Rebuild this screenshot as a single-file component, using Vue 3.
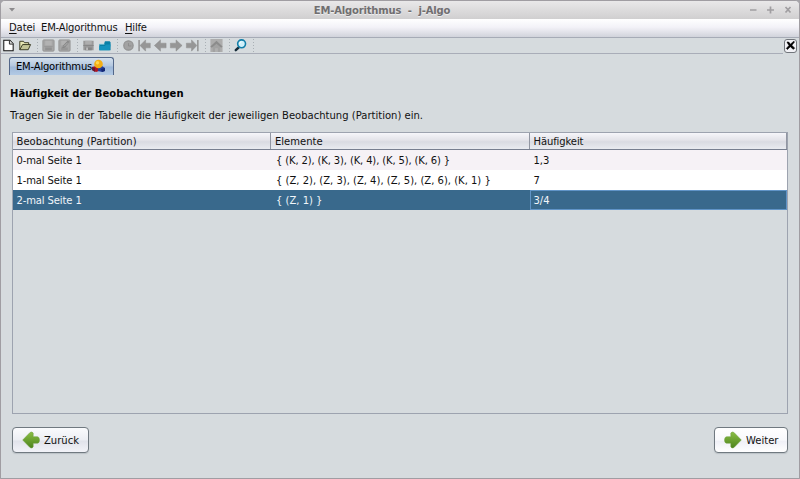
<script setup>
const rows = [
  { name: '0-mal Seite 1', items: '{ (K, 2), (K, 3), (K, 4), (K, 5), (K, 6) }', count: '1,3', tight: true },
  { name: '1-mal Seite 1', items: '{ (Z, 2), (Z, 3), (Z, 4), (Z, 5), (Z, 6), (K, 1) }', count: '7' },
  { name: '2-mal Seite 1', items: '{ (Z, 1) }', count: '3/4', selected: true },
]
</script>

<template>
  <div class="window">
    <header class="titlebar">
      <svg class="sysmenu" width="8" height="6"><path d="M1 1h6L4 4.500z" fill="#8c8a8d" /></svg>
      <h1 class="title">EM-Algorithmus&nbsp; -&nbsp; j-Algo</h1>
      <svg class="controls" width="44" height="10" fill="none" stroke="#a09ea1" stroke-width="1.700">
        <path d="M1 5H7.500M18 5h7M21.500 1.500v7M36.500 2l5 5.500M41.500 2l-5 5.500" />
      </svg>
    </header>
    <nav class="menubar">
      <span class="m1"><u>D</u>atei</span>
      <span class="m2">EM-Algorithmus</span>
      <span class="m3"><u>H</u>ilfe</span>
    </nav>
    <div class="toolbar">
      <svg class="icon" viewBox="0 0 16 16"><path d="M3.500 2.500h6.500l3.500 3.500v7.500h-10z" fill="#fff" stroke="#111" stroke-width="1.100" /><path d="M9.500 2.500V6.500h4" fill="#ddd" stroke="#222" /></svg>
      <svg class="icon" viewBox="0 0 16 16"><path d="M3.500 12.500v-9h4l1 1.500h4.500v2.500" fill="#e8e8b4" stroke="#34351d" /><path d="M3.500 12.500l3-5.500h8.500l-2.500 5.500z" fill="#c3c596" stroke="#34351d" /></svg>
      <i class="sep" />
      <svg class="icon" viewBox="0 0 16 16"><rect x="2.500" y="2" width="12" height="12" rx="1" fill="#a5a5a5" stroke="#989898" /><path d="M5 3h7v5H5z" fill="#b2b2b2" /><path d="M5 10h7v3H5z" fill="#919191" /><path d="M4 9h9" stroke="#969696" /></svg>
      <svg class="icon" viewBox="0 0 16 16"><rect x="2.500" y="2" width="12" height="12" rx="1" fill="#a5a5a5" stroke="#989898" /><path d="M5 3h6v5H5z" fill="#b2b2b2" /><path d="M5 10h7v3H5z" fill="#969696" /><path d="M6 11l1-3 5-5 2 1-5 6z" fill="#858585" /><path d="M8 9l4-4" stroke="#b5b5b5" /></svg>
      <i class="sep" />
      <svg class="icon" viewBox="0 0 16 16"><path d="M3 3h11v10H3z" fill="#999" /><path d="M5 3h7v4H5z" fill="#aeaeae" /><path d="M3 8h11" stroke="#868686" /><path d="M5 10h7v3H5z" fill="#858585" /><path d="M6 10h2v3H6z" fill="#bbb" /></svg>
      <svg class="icon" viewBox="0 0 16 16"><path d="M3 6.500h5l1-3h5l1 1v8.500H3z" fill="#087fa6" /><path d="M3 8.500h6l1-1.500h5l-1 6H3z" fill="#1392bd" /><path d="M3 6.500h5.500" stroke="#a8d9e8" /></svg>
      <i class="sep" />
      <svg class="icon" viewBox="0 0 16 16"><circle cx="8.500" cy="8" r="5" fill="#a2a2a2" stroke="#929292" stroke-width="1.300" /><path d="M8.500 5.500v3h3" fill="none" stroke="#8b8b8b" /></svg>
      <svg class="icon nav" viewBox="0 0 16 16"><path d="M2.750 2v12" stroke-width="1.500" /><path d="M3.700 8l6-6v3.500h5v5h-5V14z" /></svg>
      <svg class="icon nav" viewBox="0 0 16 16"><path d="M2 8l6.500-6v3.500h6v5h-6V14z" /></svg>
      <svg class="icon nav" viewBox="0 0 16 16"><path d="M14.500 8L8 2v3.500H2v5h6V14z" /></svg>
      <svg class="icon nav" viewBox="0 0 16 16"><path d="M14.250 2v12" stroke-width="1.500" /><path d="M13.200 8L7.500 2v3.500H2v5h5.500V14z" /></svg>
      <i class="sep" />
      <svg class="icon" viewBox="0 0 16 16"><path d="M2 1h13v14H2z" fill="#adadad" /><path d="M4.500 9L8.500 5l4 4v6h-8z" fill="#a2a2a2" /><path d="M2 9l6.500-6 6.500 6-1.500 1.500-5-4.500-5 4.500z" fill="#8c8c8c" /><path d="M7 11h3v4H7z" fill="#b0b0b0" /></svg>
      <i class="sep" />
      <svg class="icon" viewBox="0 0 16 16"><path d="M3.500 13L7 9.700" stroke="#152b38" stroke-width="2.600" stroke-linecap="round" /><circle cx="9.700" cy="6.200" r="4.200" fill="#d0f1fb" stroke="#137fa9" stroke-width="1.700" /><path d="M7.500 6q.3-1.700 2-2" stroke="#fff" fill="none" /></svg>
      <i class="sep" />
      <button class="close" aria-label="x"><svg width="11" height="11"><path d="M2 2.200Q3.500 1 5.400 4.200L8.800 1.200 9.500 2 6.800 5.200 9.700 8.200 8.200 9.300 5.300 6.700 2.400 9.500 1.300 8.400 4 5.500z" fill="#000" stroke="#000" stroke-width=".6" /></svg></button>
    </div>
    <div class="tabs">
      <div class="tab">
        <span class="tabtext">EM-Algorithmus</span>
        <svg class="tabicon" width="13" height="14" viewBox="0 0 13 14"><path d="M0 8l4-1 3 2v3l-3 1-4-2z" fill="#aa1525" /><path d="M0 8l3 1v4L0 11z" fill="#68172e" /><path d="M6 9l4-2 3 2v3l-3 1-4-1z" fill="#263f9a" /><path d="M9 10l4-1v3l-3 1z" fill="#142875" /><circle cx="6.500" cy="5" r="4.300" fill="#f4ae13" /><circle cx="5.500" cy="3.800" r="1.700" fill="#ffd64f" /></svg>
      </div>
    </div>
    <main class="content">
      <h2 class="heading">Häufigkeit der Beobachtungen</h2>
      <p class="hint">Tragen Sie in der Tabelle die Häufigkeit der jeweiligen Beobachtung (Partition) ein.</p>
      <section class="table">
        <div class="row head">
          <div><span class="h1">Beobachtung (Partition)</span></div>
          <div><span class="h2">Elemente</span></div>
          <div><span class="h3">Häufigkeit</span></div>
        </div>
        <div v-for="row in rows" :key="row.name" class="row" :class="{ selected: row.selected }">
          <div><span class="name">{{ row.name }}</span></div>
          <div><span :class="{ tight: row.tight }">{{ row.items }}</span></div>
          <div><span>{{ row.count }}</span></div>
        </div>
      </section>
      <footer class="actions">
        <button class="btn back">
          <svg class="arrow" width="18" height="18" viewBox="0 0 18 18"><defs><linearGradient id="green" x2="0" y2="1"><stop stop-color="#8bbf45" /><stop offset="1" stop-color="#4c831d" /></linearGradient></defs><path d="M.7 9L8 1.500Q10 .2 11.200 2v3.700H15.500Q17.500 6 17.500 9t-2 3.200H11.200v3.500Q10.500 18 8 16.500z" fill="url(#green)" stroke="#6c9f3c" stroke-width=".5" /></svg>
          <span>Zurück</span>
        </button>
        <button class="btn next">
          <svg class="arrow" width="18" height="18" viewBox="0 0 18 18"><path d="M17.300 9L10 1.500Q8 .2 6.800 2v3.700H2.500Q.5 6 .5 9t2 3.200H6.800v3.500Q7.500 18 10 16.500z" fill="url(#green)" stroke="#6c9f3c" stroke-width=".5" /></svg>
          <span>Weiter</span>
        </button>
      </footer>
    </main>
  </div>
</template>

<style>
body { margin: 0; background: #a5a3a8; }
</style>

<style scoped>
* { box-sizing: border-box; }
.window { width: 800px; height: 479px; display: flex; flex-direction: column; border: 1px solid #a09da2; border-radius: 5px 5px 0 0; overflow: hidden; background: #d6dbde; color: #111; font-family: "DejaVu Sans", sans-serif; font-size: 10px; white-space: nowrap; }
.titlebar { height: 18px; flex: none; display: grid; grid-template-columns: 42px 1fr 78px; align-items: center; background: linear-gradient(#e9e8e9, #d0cfd0); }
.sysmenu { margin-left: 7px; }
.title { margin: 0; padding-top: 1px; text-align: center; font-size: 10px; line-height: 16px; letter-spacing: -.17px; color: #706e70; text-shadow: 0 1px #eee; }
.controls { margin-left: 28px; }
.menubar { height: 19px; flex: none; display: flex; align-items: center; padding-left: 8px; background: linear-gradient(#fff, #f3f2f8 45%, #d1d3db); border-bottom: 1px solid #a6abb6; }
.menubar span { line-height: 18px; }
.menubar u { text-underline-offset: 2px; }
.m1 { width: 32px; letter-spacing: -.1px; }
.m2 { width: 84px; letter-spacing: -.17px; }
.m3 { letter-spacing: -.2px; }
.toolbar { height: 15px; flex: none; display: flex; align-items: center; margin-left: -1px; }
.icon { width: 16px; height: 15px; flex: none; }
.nav { fill: #969696; stroke: #8d8d8d; stroke-width: .5; }
.sep { width: 8px; height: 14px; flex: none; background: repeating-linear-gradient(#a9b0b5 0 1px, transparent 1px 3px) 5px 0 / 1px 14px no-repeat; }
.close { width: 13px; height: 14px; margin-left: auto; margin-right: 2px; padding: 0; display: grid; place-items: center; border: 1px solid #71757b; border-radius: 3px; background: #f2f2f6; }
.tabs { height: 22px; flex: none; margin-right: 16px; border-top: 1px solid #a9adb8; padding: 3px 0 0 8px; }
.tab { width: 105px; height: 18px; display: flex; align-items: center; padding-left: 6px; border: 1px solid #536789; border-bottom: 0; border-radius: 3px 3px 0 0; background: linear-gradient(#d4e0ec, #b2c6df 48%, #9db7d8 52%, #b3cae4); color: #000; }
.tabtext { width: 76px; letter-spacing: -.2px; }
.tabicon { flex: none; margin-top: -2px; }
.content { flex: 1; padding: 12px 11px 0; display: flex; flex-direction: column; }
.heading { margin: 0 0 0 -2px; font-size: 10px; line-height: 14px; letter-spacing: .03px; color: #000; }
.hint { margin: 7px 0 0 -2px; line-height: 15px; letter-spacing: .012px; }
.table { height: 282px; margin-top: 9px; border: 1px solid #9da3af; }
.row { height: 20px; display: grid; grid-template-columns: 258px 259px 1fr; background: #f6f2f6; }
.row:nth-child(3) { background: #fff; }
.row > div { height: 20px; padding-left: 3.500px; border: 1px solid transparent; border-width: 1px 0 0; line-height: 20px; }
.row > div:not(:first-child) { padding-left: 5px; }
.row > div:last-child { padding-left: 3.500px; }
.name { letter-spacing: -.12px; }
.tight { letter-spacing: -.14px; }
.row.head { height: 17px; background: linear-gradient(#f6f6fa, #e3e3e9 45%, #d9dbe2 55%, #e9ebf0); border-bottom: 1px solid #777f90; }
.head > div { height: 16px; line-height: 17px; border-width: 0 1px 0 0; border-color: #9196a2; }
.head > div:not(:first-child) { padding-left: 4px; }
.head > div:last-child { padding-left: 3.500px; }
.h1 { letter-spacing: .05px; }
.h3 { letter-spacing: -.1px; }
.row.selected { background: #39698c; color: #f1f6fa; }
.selected > div:last-child { border: 1px solid #6094c7; padding-left: 2.500px; }
.actions { display: flex; justify-content: space-between; margin-top: 13px; }
.btn { height: 26px; padding: 0 9px; display: flex; align-items: center; gap: 4px; border: 1px solid #707980; border-radius: 4px; background: linear-gradient(#fafbfd, #edeff4 48%, #e1e3eb 55%, #f2f3f8); box-shadow: 0 1px 1px #bbc1c6; color: #111; font: 10px "DejaVu Sans", sans-serif; }
.back { width: 77px; }
.next { width: 74px; background: linear-gradient(#fff, #f8f9fc 50%, #eff0f7 55%, #fff); }
.arrow { flex: none; }
</style>
